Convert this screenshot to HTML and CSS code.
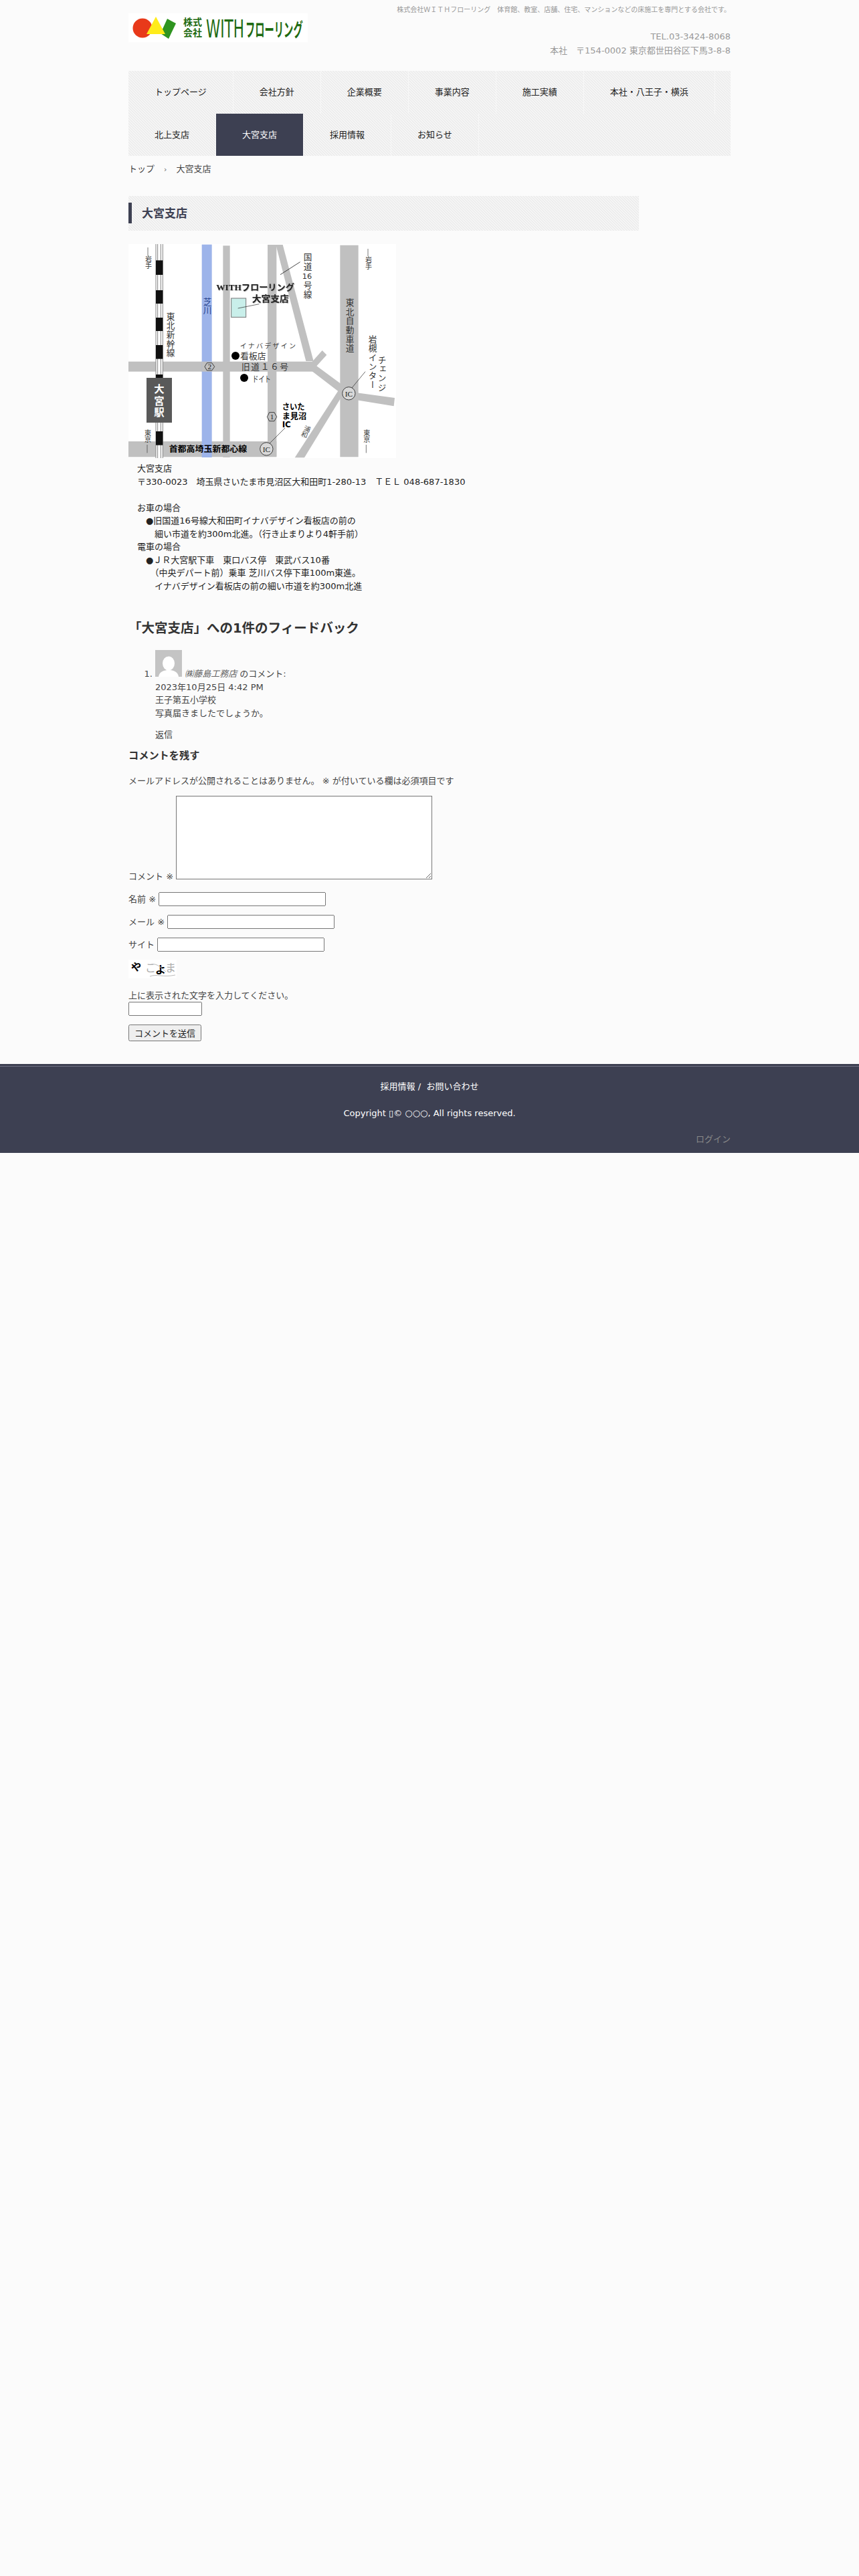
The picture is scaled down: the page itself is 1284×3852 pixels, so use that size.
FILE: index.html
```html
<!DOCTYPE html>
<html lang="ja">
<head>
  <meta charset="UTF-8" />
  <title>大宮支店 | 株式会社WITHフローリング</title>
  <link rel="stylesheet" href="styles.css">
</head>
<body>
  <header class="site-header">
    <a class="logo" href="#">
      <svg width="268" height="43" viewBox="0 0 268 43">
        <rect width="268" height="43" fill="#fff"/>
        <circle cx="21" cy="22" r="14.500" fill="#e8391a"/>
        <path d="M58 8 L71 15 L60 38 L48 30 Z" fill="#2f9420"/>
        <path d="M41 5 L55 31 L27 31 Z" fill="#ffec1a"/>
        <text class="logo-small" x="82" y="18">株式</text>
        <text class="logo-small" x="82" y="34">会社</text>
        <text class="logo-big" transform="translate(116 36) scale(.58 1)">WITH</text>
        <text class="logo-kana" transform="translate(175 35) scale(.51 1)">フローリング</text>
      </svg>
    </a>
    <div class="header-info">
      <p class="tagline">株式会社ＷＩＴＨフローリング　体育館、教室、店舗、住宅、マンションなどの床施工を専門とする会社です。</p>
      <p class="tel">TEL.03-3424-8068</p>
      <p class="address">本社　〒154-0002 東京都世田谷区下馬3-8-8</p>
    </div>
  </header>

  <nav class="global-nav">
    <ul>
      <li><a href="#">トップページ</a></li>
      <li><a href="#">会社方針</a></li>
      <li><a href="#">企業概要</a></li>
      <li><a href="#">事業内容</a></li>
      <li><a href="#">施工実績</a></li>
      <li><a href="#">本社・八王子・横浜</a></li>
      <li><a href="#">北上支店</a></li>
      <li class="current"><a href="#">大宮支店</a></li>
      <li><a href="#">採用情報</a></li>
      <li><a href="#">お知らせ</a></li>
    </ul>
  </nav>

  <main class="wrap">
    <div class="breadcrumb">トップ<span class="sep">›</span>大宮支店</div>

    <h1 class="page-title">大宮支店</h1>

    <svg class="map" width="400" height="320" viewBox="36 45 1200 960">
      <rect x="36" y="45" width="1200" height="960" fill="#fff"/>
      <!-- roads -->
      <g fill="#c0c0c0">
        <rect x="36" y="572" width="830" height="45"/>
        <rect x="36" y="930" width="664" height="70"/>
        <rect x="460" y="52" width="31" height="950"/>
        <rect x="660" y="48" width="40" height="950"/>
        <rect x="985" y="50" width="82" height="950"/>
        <path d="M697 48 L728 48 L866 570 L832 570 Z"/>
        <path d="M860 572 L905 522 L925 542 L880 592 L1000 680 L985 712 L855 612 Z"/>
        <path d="M985 690 L1010 700 L825 1003 L782 1003 Z"/>
        <path d="M1060 712 L1230 735 L1226 772 L1060 745 Z"/>
      </g>
      <rect x="365" y="47" width="45" height="955" fill="#9db4ea"/>
      <rect x="365" y="572" width="45" height="45" fill="#c0c0c0"/>
      <!-- rail -->
      <rect x="158" y="45" width="33" height="960" fill="#fff"/>
      <g stroke="#444" stroke-width="2" fill="none">
        <path d="M159 45V1005M167 45V1005M181 45V1005M190 45V1005"/>
      </g>
      <g fill="#111">
        <rect x="159" y="118" width="31" height="65"/>
        <rect x="159" y="252" width="31" height="60"/>
        <rect x="159" y="375" width="31" height="60"/>
        <rect x="159" y="498" width="31" height="62"/>
        <rect x="159" y="630" width="31" height="16"/>
        <rect x="159" y="885" width="31" height="62"/>
      </g>
      <rect x="117" y="645" width="114" height="201" fill="#595959"/>
      <g class="map-station">
        <text x="174" y="712">大</text>
        <text x="174" y="764">宮</text>
        <text x="174" y="816">駅</text>
      </g>
      <!-- shop -->
      <rect x="497" y="288" width="66" height="85" fill="#c9efea" stroke="#777" stroke-width="3"/>
      <path d="M527 333 L622 314" stroke="#222" stroke-width="2"/>
      <path d="M806 125 L717 182" stroke="#222" stroke-width="2.500"/>
      <path d="M1098 617 L1038 690" stroke="#222" stroke-width="2"/>
      <path d="M738 870 L668 940" stroke="#222" stroke-width="2"/>
      <text class="map-brand" x="430" y="252" textLength="350" lengthAdjust="spacingAndGlyphs">WITHフローリング</text>
      <text class="map-brand" x="590" y="302" textLength="165" lengthAdjust="spacingAndGlyphs">大宮支店</text>
      <!-- vertical labels -->
      <g class="map-label">
        <text class="v" x="837" y="84">国道</text>
        <text class="h16" x="837" y="202">16</text>
        <text class="v" x="837" y="210">号線</text>
        <text class="v" x="1026" y="288">東北自動車道</text>
        <text class="v" x="222" y="350">東北新幹線</text>
        <text class="v blue" x="387" y="284">芝川</text>
        <text class="v" x="1128" y="452">岩槻インター</text>
        <text class="v" x="1170" y="545">チェンジ</text>
      </g>
      <g class="map-small">
        <text class="v" x="123" y="98">岩手</text>
        <text class="v" x="1110" y="100">岩手</text>
        <text class="v" x="120" y="878">東京</text>
        <text class="v" x="1102" y="878">東京</text>
      </g>
      <path d="M123 60V98M1110 66V100M120 945V982M1102 945V982" stroke="#333" stroke-width="2"/>
      <text class="map-thin" x="536" y="513" textLength="250">イナバデザイン</text>
      <circle cx="516" cy="546" r="18" fill="#000"/>
      <text class="map-label" x="538" y="562">看板店</text>
      <text class="map-label" x="543" y="610" textLength="210">旧道１６号</text>
      <circle cx="555" cy="645" r="18" fill="#000"/>
      <text class="map-label" x="592" y="663" textLength="82" lengthAdjust="spacingAndGlyphs">ドイト</text>
      <text class="map-bold" x="725" y="790" textLength="102" lengthAdjust="spacingAndGlyphs">さいた</text>
      <text class="map-bold" x="725" y="830" textLength="110" lengthAdjust="spacingAndGlyphs">ま見沼</text>
      <text class="map-bold" x="725" y="868">IC</text>
      <text class="map-bold" x="218" y="978" textLength="350" lengthAdjust="spacingAndGlyphs">首都高埼玉新都心線</text>
      <text class="map-thin" transform="translate(820 880) rotate(20)">浦</text>
      <text class="map-thin" transform="translate(808 905) rotate(20)">和</text>
      <g class="map-marks">
        <path d="M378 595 L388 578 H410 L422 595 L410 612 H388 Z"/>
        <path d="M658 820 L668 800 H690 L701 820 L690 839 H668 Z"/>
        <circle cx="1024" cy="715" r="29"/>
        <circle cx="655" cy="964" r="29"/>
      </g>
      <text class="map-num" x="400" y="606">2</text>
      <text class="map-num" x="680" y="832">1</text>
      <text class="map-num" x="1024" y="728">IC</text>
      <text class="map-num" x="655" y="977">IC</text>
    </svg>

    <p class="shop-info">　大宮支店<br>　〒330-0023　埼玉県さいたま市見沼区大和田町1-280-13　ＴＥＬ 048-687-1830<br><br>　お車の場合<br>　　●旧国道16号線大和田町イナバデザイン看板店の前の<br>　　　細い市道を約300m北進。（行き止まりより4軒手前）<br>　電車の場合<br>　　●ＪＲ大宮駅下車　東口バス停　東武バス10番<br>　　　（中央デパート前）乗車 芝川バス停下車100m東進。<br>　　　イナバデザイン看板店の前の細い市道を約300m北進</p>

    <h2 class="comments-title">「大宮支店」への1件のフィードバック</h2>

    <ol class="comment-list">
      <li>
        <div class="comment-author">
          <svg class="avatar" width="40" height="40" viewBox="0 0 40 40">
            <rect width="40" height="40" fill="#c4c4c4"/>
            <ellipse cx="20" cy="20" rx="9" ry="10.500" fill="#fff"/>
            <path d="M5 40 C6 32 14 30 20 30 C26 30 34 32 35 40 Z" fill="#fff"/>
          </svg>
          <cite>㈱藤島工務店</cite> のコメント:
        </div>
        <div class="comment-date">2023年10月25日 4:42 PM</div>
        <p class="comment-body">王子第五小学校<br>写真届きましたでしょうか。</p>
        <div class="reply">返信</div>
      </li>
    </ol>

    <h3 class="reply-title">コメントを残す</h3>
    <form class="comment-form">
      <p class="notes">メールアドレスが公開されることはありません。 ※ が付いている欄は必須項目です</p>
      <p class="field"><label>コメント ※</label> <textarea class="comment-text"></textarea></p>
      <p class="field"><label>名前 ※</label> <input type="text"></p>
      <p class="field"><label>メール ※</label> <input type="text"></p>
      <p class="field"><label>サイト</label> <input type="text"></p>
      <svg class="captcha" width="72" height="28" viewBox="0 0 72 28">
        <rect width="72" height="28" fill="#fff"/>
        <text class="cap-bold" transform="translate(6 19) rotate(-18)">や</text>
        <text class="cap-thin" x="25" y="18">こ</text>
        <text class="cap-bold" x="40" y="21">よ</text>
        <text class="cap-thin" x="55" y="18">ま</text>
        <path d="M32 25 C42 21 52 27 70 23 M34 7 C44 5 50 14 56 18" stroke="#bbb" fill="none"/>
      </svg>
      <p class="captcha-label">上に表示された文字を入力してください。<br><input class="captcha-input" type="text"></p>
      <p class="submit"><button type="button">コメントを送信</button></p>
    </form>
  </main>

  <footer class="site-footer">
    <div class="footer-links">採用情報 /&nbsp; お問い合わせ</div>
    <div class="copyright">Copyright &#x25AF;© ○○○, All rights reserved.</div>
    <div class="login"><a href="#">ログイン</a></div>
  </footer>
</body>
</html>
```

FILE: styles.css
```css
body {
  margin: 0;
  background: #fbfbfb;
  color: #444;
  font-family: "DejaVu Sans", "Noto Sans CJK JP", sans-serif;
  font-size: 13px;
  line-height: 1.5;
  min-height: 3852px;
}

p {
  margin: 0;
}

a {
  color: inherit;
  text-decoration: none;
}

/* header */
.site-header {
  width: 900px;
  height: 106px;
  margin: 0 auto;
  display: flex;
  justify-content: space-between;
}

.logo {
  display: block;
  margin-top: 20px;
  height: 43px;
}

.logo svg {
  overflow: visible;
}

.logo-small {
  font-size: 14px;
  font-weight: bold;
  fill: #1f6b12;
}

.logo-big {
  font-size: 37px;
  fill: #1f6b12;
}

.logo-kana {
  font-size: 28px;
  font-weight: bold;
  fill: #1f6b12;
}

.header-info {
  text-align: right;
  color: #999;
}

.tagline {
  font-size: 10px;
  margin-top: 7px;
  line-height: 16px;
}

.tel {
  margin-top: 22px;
  line-height: 20px;
}

.address {
  line-height: 20px;
  margin-top: 1px;
}

/* nav */
.global-nav {
  width: 900px;
  margin: 0 auto;
  background: linear-gradient(45deg, #ececec 25%, #f6f6f6 25%, #f6f6f6 50%, #ececec 50%, #ececec 75%, #f6f6f6 75%);
  background-size: 4px 4px;
}

.global-nav ul {
  list-style: none;
  margin: 0;
  padding: 0;
  display: flex;
  flex-wrap: wrap;
}

.global-nav li {
  border-right: 1px solid #f8f8f8;
}

.global-nav li a {
  display: block;
  padding: 0 39px;
  height: 63.500px;
  line-height: 63px;
  color: #222;
}

.global-nav li.current a {
  background: #3d4052;
  color: #fff;
}

/* content */
.wrap {
  width: 900px;
  margin: 0 auto;
}

.breadcrumb {
  padding-top: 10px;
  height: 50px;
  box-sizing: border-box;
  line-height: 20px;
  color: #444;
}

.breadcrumb .sep {
  margin: 0 14px;
  color: #666;
  font-size: 11px;
}

.page-title {
  width: 763px;
  height: 52px;
  box-sizing: border-box;
  margin: 10px 0 20px;
  padding: 10px 0 10px 20px;
  font-size: 17px;
  line-height: 32px;
  color: #3d4052;
  background: linear-gradient(45deg, #ececec 25%, #f6f6f6 25%, #f6f6f6 50%, #ececec 50%, #ececec 75%, #f6f6f6 75%);
  background-size: 4px 4px;
  position: relative;
}

.page-title::before {
  content: "";
  position: absolute;
  left: 0;
  top: 10px;
  width: 5px;
  height: 31px;
  background: #3d4052;
}

.map {
  display: block;
}

.map-station text {
  font-size: 46px;
  font-weight: bold;
  fill: #fff;
  text-anchor: middle;
}

.map-brand {
  font-size: 38px;
  font-weight: bold;
  font-family: "Liberation Serif", "Noto Sans CJK JP", serif;
  fill: #222;
  filter: drop-shadow(2px 2px 1px #999);
}

.map-label text,
.map-label {
  font-size: 38px;
  fill: #333;
}

.map-label .v {
  letter-spacing: 3px;
}

.map-label .h16 {
  text-anchor: middle;
  font-size: 34px;
}

.map-small text {
  font-size: 30px;
  fill: #333;
}

.v {
  writing-mode: vertical-rl;
  text-orientation: upright;
}

.map-label .blue {
  fill: #24408a;
}

.map-thin {
  font-size: 30px;
  fill: #444;
}

.map-bold {
  font-size: 36px;
  font-weight: bold;
  fill: #000;
}

.map-marks {
  fill: #d8d8d8;
  stroke: #222;
  stroke-width: 2.500;
}

.map-marks path {
  fill: none;
}

.map-num {
  font-size: 34px;
  fill: #222;
  text-anchor: middle;
  font-family: "Liberation Serif", serif;
}

.shop-info {
  color: #222;
  margin-top: 6px;
}

.comments-title {
  font-size: 19.500px;
  line-height: 29px;
  margin: 39px 0 0;
  color: #333;
}

.comment-list {
  margin: 18px 0 0;
  padding-left: 40px;
}

.comment-author cite {
  color: #666;
}

.reply {
  margin-top: 13px;
}

.reply-title {
  font-size: 15.200px;
  line-height: 23px;
  margin: 10px 0 0;
  color: #333;
}

.notes {
  margin-top: 16px;
}

.field {
  margin-top: 13px;
}

.comment-text {
  width: 377px;
  height: 119px;
  vertical-align: baseline;
  margin: 0;
  background: #fff;
}

.field input {
  width: 242px;
  height: 15px;
}

.captcha {
  display: block;
  margin-top: 12px;
}

.captcha text {
  font-size: 16px;
}

.cap-bold {
  font-weight: bold;
  fill: #000;
}

.cap-thin {
  fill: #aaa;
}

.captcha-label {
  margin-top: 16px;
}

.captcha-input {
  width: 102px;
  height: 15px;
  vertical-align: top;
}

.submit {
  margin-top: 13px;
}

.submit button {
  width: 109px;
  height: 25px;
  padding: 0;
  font-family: inherit;
  font-size: 13px;
  color: #222;
}

/* footer */
.site-footer {
  margin-top: 34px;
  height: 133px;
  box-sizing: border-box;
  background: #3d4052;
  border-top: 3px solid #3d4052;
  box-shadow: inset 0 1px 0 #6f7183;
  color: #fff;
  text-align: center;
}

.footer-links {
  padding-top: 21px;
  line-height: 20px;
}

.copyright {
  margin-top: 20px;
  line-height: 20px;
}

.login {
  width: 900px;
  margin: 19px auto 0;
  text-align: right;
  line-height: 20px;
  color: #888;
}
```
